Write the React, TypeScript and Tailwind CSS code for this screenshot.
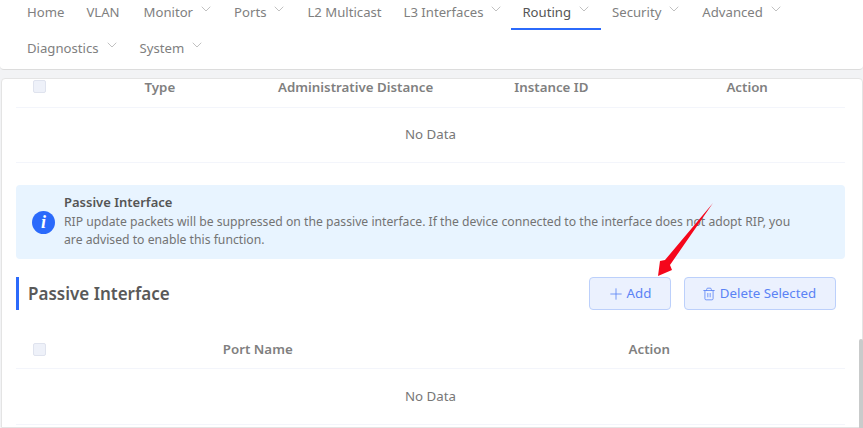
import { ChevronDown, Plus, Trash2 } from 'lucide-react';

const NAV_ITEMS = [
  { label: 'Home' },
  { label: 'VLAN', extra: 'mr-[2px]' },
  { label: 'Monitor', menu: true },
  { label: 'Ports', menu: true },
  { label: 'L2 Multicast' },
  { label: 'L3 Interfaces', menu: true, extra: 'mr-[-2px]' },
  { label: 'Routing', menu: true, active: true },
  { label: 'Security', menu: true },
  { label: 'Advanced', menu: true },
  { label: 'Diagnostics', menu: true },
  { label: 'System', menu: true },
];

function Checkbox() {
  return <span className="block w-[13px] h-[13px] rounded-[2px] border border-[#dfe3ee] bg-[#eef1f9]" />;
}

export default function App() {
  return (
    <div className="relative h-[428px] w-[863px] overflow-hidden bg-[#f2f3f5] font-['Noto_Sans',sans-serif]">
      {/* Top nav */}
      <nav className="h-[70px] flex flex-wrap content-start gap-y-[6px] pl-[16px] pr-[40px] bg-white border-b border-[#dcdcdc] rounded-b-[4px]">
        {NAV_ITEMS.map(item => (
          <div
            key={item.label}
            className={`h-[30px] flex items-start px-[11px] text-[13.15px] leading-[24px] border-b-2 ${item.extra ?? ''} ${
              item.active ? 'border-[#2b6afb] text-[#555]' : 'border-transparent text-[#808080]'
            }`}
          >
            <span>{item.label}</span>
            {item.menu && <ChevronDown className="mt-[1px] ml-[5px] mr-[-2px] w-[16px] h-[16px] text-[#aaa]" strokeWidth={1.1} />}
          </div>
        ))}
      </nav>

      {/* Content card */}
      <main className="mt-[8px] h-[350px] ml-[1px] pl-[14px] pr-[17px] bg-white border border-[#e4e4e4] rounded-t-[4px]">
        <div className="grid grid-cols-[46px_repeat(4,1fr)] h-[29px] items-start border-b border-[#f3f5fb] text-[13.3px] leading-[16px] font-semibold text-[#808080] text-center">
          <span className="pl-[17px] pt-[1px]"><Checkbox /></span>
          <span>Type</span>
          <span>Administrative Distance</span>
          <span>Instance ID</span>
          <span>Action</span>
        </div>
        <div className="h-[55px] pb-[1px] flex items-center justify-center border-b border-[#f3f5fb] text-[13.3px] text-[#777]">
          No Data
        </div>

        {/* Info alert */}
        <div className="mt-[22px] h-[74px] flex items-center gap-[9px] pl-[16px] pr-[45px] bg-[#e8f4ff] rounded-[4px]">
          <span className="w-[23px] h-[23px] shrink-0 flex items-center justify-center rounded-full bg-[#2b6afb] text-white text-[18px] font-bold italic font-['Liberation_Serif',serif]">
            i
          </span>
          <div className="pb-[4px] text-[12.2px] leading-[18px] text-[#737373]">
            <div className="mb-[1px] text-[13px] leading-[20px] font-semibold text-[#555]">Passive Interface</div>
            <div>
              RIP update packets will be suppressed on the passive interface. If the device connected to the interface does not adopt RIP, you are advised to enable this function.
            </div>
          </div>
        </div>

        {/* Section header */}
        <div className="mt-[18px] flex items-center h-[33px] pr-[9px]">
          <div className="h-full w-[3px] bg-[#2b6afb]" />
          <h2 className="ml-[9px] text-[17px] font-semibold text-[#595959]">Passive Interface</h2>
          <button className="ml-auto w-[82px] h-full flex items-center justify-center gap-[2px] pr-[2px] rounded-[4px] border border-[#bcd0fb] bg-[#ebf1fe] text-[13.3px] text-[#5b83f5]">
            <Plus className="w-[18px] h-[18px]" strokeWidth={1.1} />
            Add
          </button>
          <button className="ml-[13px] w-[152px] h-full flex items-center justify-center gap-[4px] pr-[2px] rounded-[4px] border border-[#bcd0fb] bg-[#ebf1fe] text-[13.3px] text-[#5b83f5]">
            <Trash2 className="w-[14px] h-[14px]" strokeWidth={1.4} />
            Delete Selected
          </button>
        </div>

        <div className="mt-[23px] grid grid-cols-[46px_1fr_1fr] h-[36px] pb-[2px] items-center border-b border-[#f3f5fb] text-[13.3px] font-semibold text-[#808080] text-center">
          <span className="pl-[17px]"><Checkbox /></span>
          <span>Port Name</span>
          <span>Action</span>
        </div>
        <div className="h-[56px] flex items-center justify-center border-b border-[#f3f5fb] text-[13.3px] text-[#777]">
          No Data
        </div>
      </main>

      {/* Annotation arrow */}
      <svg className="absolute left-0 top-0 pointer-events-none" width="863" height="428">
        <polygon points="713,203 670,265 672,270 658,276 660,261 665,260" fill="#f5061b" />
      </svg>

      {/* Scrollbar thumb */}
      <div className="absolute right-0 top-[339px] bottom-0 w-[4px] rounded-t-[2px] bg-[#c9cbcb]" />
    </div>
  );
}
